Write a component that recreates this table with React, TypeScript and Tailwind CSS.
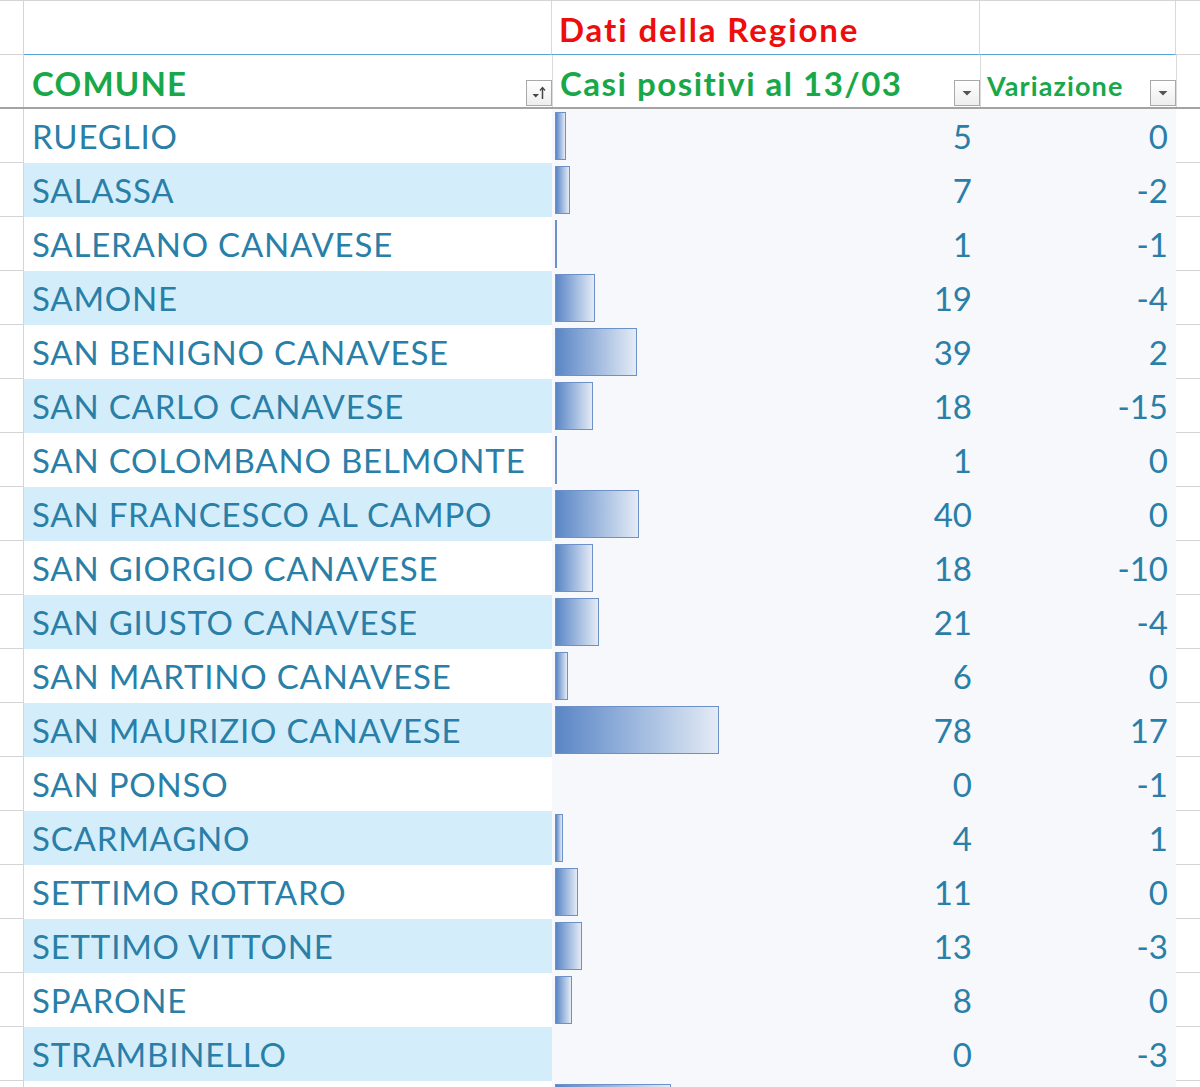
import React from "react";

const rows: [string, number, number][] = [
  ["RUEGLIO", 5, 0],
  ["SALASSA", 7, -2],
  ["SALERANO CANAVESE", 1, -1],
  ["SAMONE", 19, -4],
  ["SAN BENIGNO CANAVESE", 39, 2],
  ["SAN CARLO CANAVESE", 18, -15],
  ["SAN COLOMBANO BELMONTE", 1, 0],
  ["SAN FRANCESCO AL CAMPO", 40, 0],
  ["SAN GIORGIO CANAVESE", 18, -10],
  ["SAN GIUSTO CANAVESE", 21, -4],
  ["SAN MARTINO CANAVESE", 6, 0],
  ["SAN MAURIZIO CANAVESE", 78, 17],
  ["SAN PONSO", 0, -1],
  ["SCARMAGNO", 4, 1],
  ["SETTIMO ROTTARO", 11, 0],
  ["SETTIMO VITTONE", 13, -3],
  ["SPARONE", 8, 0],
  ["STRAMBINELLO", 0, -3],
  ["", 55, 0],
];

function FilterButton({ sort }: { sort?: boolean }) {
  return (
    <div className="w-[26px] h-[26px] border border-[#a9a9a9] bg-gradient-to-b from-white to-[#eeeeee] flex items-center justify-center shrink-0">
      {sort ? (
        <svg width="20" height="18" viewBox="0 0 20 18">
          <path d="M3.5 10 L10 10 L6.75 13.5 Z" fill="#444" />
          <path d="M13.5 15 L13.5 4" stroke="#444" strokeWidth="1.5" />
          <path d="M11 6.5 L13.5 3.5 L16 6.5" stroke="#444" strokeWidth="1.3" fill="none" />
        </svg>
      ) : (
        <svg width="14" height="10" viewBox="0 0 14 10">
          <path d="M2.5 3 L11.5 3 L7 7.5 Z" fill="#555" />
        </svg>
      )}
    </div>
  );
}

export default function App() {
  return (
    <div
      className="w-[1200px] h-screen overflow-hidden bg-white flex flex-col"
      style={{ fontFamily: "Lato, 'Open Sans', sans-serif" }}
    >
      {/* Row 1 */}
      <div className="flex h-[55px] shrink-0 border-t border-[#d4d4d4]">
        <div className="w-[24px] border-r border-b border-[#d4d4d4]" />
        <div className="w-[528px] border-r border-[#d9d9d9] border-b-[1.5px] border-b-[#5ba3d4]" />
        <div className="w-[428px] border-r border-[#d9d9d9] border-b-[1.5px] border-b-[#5ba3d4] flex items-center pl-[7px] pt-[4px]">
          <span className="text-[33px] font-bold text-[#ee0d0d] leading-none tracking-[1.9px]">Dati della Regione</span>
        </div>
        <div className="w-[196px] border-r border-[#d9d9d9] border-b-[1.5px] border-b-[#5ba3d4]" />
        <div className="flex-1 border-b border-[#d4d4d4]" />
      </div>
      {/* Row 2 header */}
      <div className="flex h-[54px] shrink-0 border-b-2 border-[#a3a3a3]">
        <div className="w-[24px] border-r border-[#d4d4d4]" />
        <div className="w-[528px] flex items-end justify-between pl-[8px] pb-[1px]">
          <span className="text-[33px] font-bold text-[#18a84a] leading-none mb-[6px] tracking-[1.2px]">COMUNE</span>
          <FilterButton sort />
        </div>
        <div className="w-[428px] flex items-end justify-between pl-[7px] pb-[1px] border-l border-[#d9d9d9]">
          <span className="text-[33px] font-bold text-[#18a84a] leading-none mb-[6px] tracking-[1.5px]">Casi positivi al 13/03</span>
          <FilterButton />
        </div>
        <div className="w-[196px] flex items-end justify-between pl-[6px] pb-[1px] border-l border-[#d9d9d9]">
          <span className="text-[27px] font-bold text-[#18a84a] leading-none mb-[7px] tracking-[1.1px]">Variazione</span>
          <FilterButton />
        </div>
        <div className="flex-1 border-l border-[#d9d9d9]" />
      </div>
      {rows.map(([name, v, d], i) => (
        <div key={i} className="flex h-[54px] shrink-0">
          <div className="w-[24px] border-r border-b border-[#d4d4d4]" />
          <div
            className={`w-[528px] flex items-center pl-[8px] text-[33px] text-[#2a7fa8] tracking-[0.8px] ${
              i % 2 === 1 ? "bg-[#d3eefa]" : "bg-white"
            }`}
          >
            <span className="leading-none">{name}</span>
          </div>
          <div className="w-[428px] bg-[#f6f8fb] relative flex items-center justify-end pr-[8px]">
            {v > 0 && (
              <div
                className="absolute left-[3px] top-[3px] bottom-[3px] border-[1.5px] border-[#6d91c6] bg-gradient-to-r from-[#5a86c5] to-[#e4ebf5]"
                style={{ width: Math.max(2, v * 2.1) }}
              />
            )}
            {name && <span className="text-[33px] text-[#2a7fa8] leading-none">{v}</span>}
          </div>
          <div className="w-[196px] bg-[#f6f8fb] flex items-center justify-end pr-[8px]">
            {name && <span className="text-[33px] text-[#2a7fa8] leading-none">{d}</span>}
          </div>
          <div className="flex-1 border-b border-[#d4d4d4]" />
        </div>
      ))}
    </div>
  );
}
